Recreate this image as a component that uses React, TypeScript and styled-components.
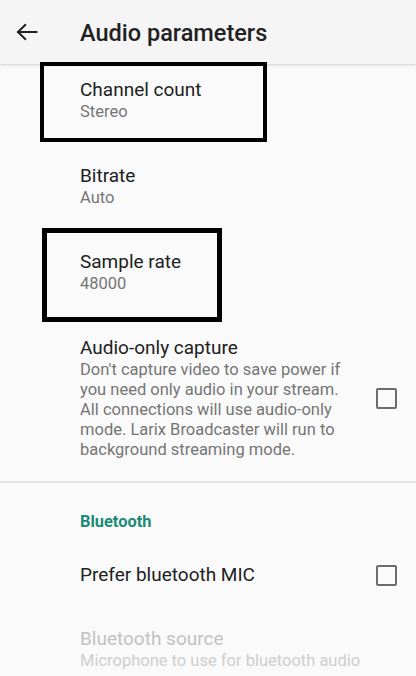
import styled, { createGlobalStyle } from "styled-components";

const GlobalStyle = createGlobalStyle`
  html, body {
    margin: 0;
    padding: 0;
    background: #fafafa;
  }
  body {
    font-family: Roboto, "Noto Sans", sans-serif;
  }
`;

const Screen = styled.div`
  position: relative;
  width: 416px;
  height: 676px;
  overflow: hidden;
  background: #fafafa;
`;

const Toolbar = styled.header`
  position: relative;
  z-index: 2;
  display: flex;
  align-items: center;
  height: 64px;
  background: #f5f5f5;
  box-shadow: 0 1px 3px rgba(0, 0, 0, 0.18);
`;

const BackButton = styled.button`
  display: flex;
  align-items: center;
  justify-content: center;
  width: 54px;
  height: 64px;
  padding: 0;
  border: 0;
  background: none;
  color: #212121;
`;

const Title = styled.h1`
  margin: 2px 0 0 26px;
  font-size: 23.5px;
  font-weight: 500;
  color: #212121;
`;

const List = styled.div`
  margin-top: -7px;
`;

const Row = styled.div<{ $single?: boolean }>`
  display: flex;
  align-items: center;
  padding: 21px 19px ${(p) => (p.$single ? 19 : 21)}px 80px;
`;

const Texts = styled.div`
  flex: 1;
  min-width: 0;
`;

const ItemTitle = styled.div<{ $disabled?: boolean }>`
  font-size: 19px;
  line-height: 24px;
  color: ${(p) => (p.$disabled ? "#c2c2c2" : "#212121")};
`;

const Summary = styled.div<{ $disabled?: boolean }>`
  font-size: 16.5px;
  line-height: 20px;
  color: ${(p) => (p.$disabled ? "#cecece" : "#757575")};
`;

const Checkbox = styled.span`
  flex: none;
  box-sizing: border-box;
  width: 21px;
  height: 21px;
  margin-left: 20px;
  border: 2.5px solid #6b6b6b;
  border-radius: 2px;
`;

const Divider = styled.hr`
  margin: 0;
  border: 0;
  height: 2px;
  background: #e4e4e4;
`;

const Category = styled.div`
  padding: 29px 0 10px 80px;
  font-size: 16.4px;
  line-height: 20px;
  font-weight: 700;
  color: #1b8a78;
`;

const Highlight = styled.div<{ $w: number }>`
  position: absolute;
  box-sizing: border-box;
  border: ${(p) => p.$w}px solid #000;
  z-index: 3;
`;

function BackArrow() {
  return (
    <svg width="24" height="24" viewBox="0 0 24 24" fill="none">
      <path
        d="M21.5 12H3M10.2 5L3 12l7.2 7"
        stroke="currentColor"
        strokeWidth="2"
        strokeLinecap="square"
      />
    </svg>
  );
}

export default function App() {
  return (
    <Screen>
      <GlobalStyle />
      <Toolbar>
        <BackButton aria-label="Back">
          <BackArrow />
        </BackButton>
        <Title>Audio parameters</Title>
      </Toolbar>
      <List>
        <Row>
          <Texts>
            <ItemTitle>Channel count</ItemTitle>
            <Summary>Stereo</Summary>
          </Texts>
        </Row>
        <Row>
          <Texts>
            <ItemTitle>Bitrate</ItemTitle>
            <Summary>Auto</Summary>
          </Texts>
        </Row>
        <Row>
          <Texts>
            <ItemTitle>Sample rate</ItemTitle>
            <Summary>48000</Summary>
          </Texts>
        </Row>
        <Row>
          <Texts>
            <ItemTitle>Audio-only capture</ItemTitle>
            <Summary>
              Don't capture video to save power if you need only audio in your
              stream. All connections will use audio-only mode. Larix
              Broadcaster will run to background streaming mode.
            </Summary>
          </Texts>
          <Checkbox />
        </Row>
        <Divider />
        <Category>Bluetooth</Category>
        <Row $single>
          <Texts>
            <ItemTitle>Prefer bluetooth MIC</ItemTitle>
          </Texts>
          <Checkbox />
        </Row>
        <Row>
          <Texts>
            <ItemTitle $disabled>Bluetooth source</ItemTitle>
            <Summary $disabled>Microphone to use for bluetooth audio</Summary>
          </Texts>
        </Row>
      </List>
      <Highlight $w={4} style={{ left: 40, top: 62, width: 227, height: 80 }} />
      <Highlight $w={5} style={{ left: 42, top: 228, width: 180, height: 94 }} />
    </Screen>
  );
}
